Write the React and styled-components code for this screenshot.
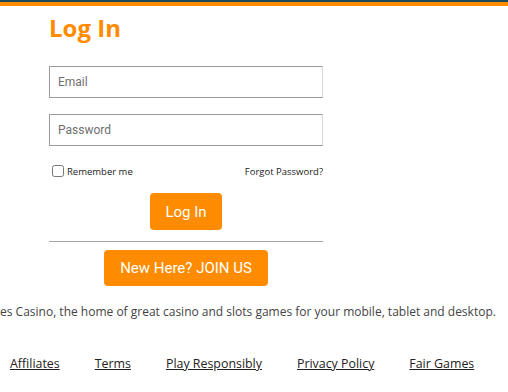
import React from "react";
import styled, { createGlobalStyle } from "styled-components";

const Global = createGlobalStyle`
  html, body { margin: 0; padding: 0; background: #fff; }
  body { font-family: "Open Sans", sans-serif; overflow: hidden; }
  * { box-sizing: border-box; }
`;

const Page = styled.div`
  width: 508px;
  height: 392px;
  overflow: hidden;
  display: flex;
  flex-direction: column;
`;

const TopBar = styled.div`
  height: 6px;
  border-top: 2px solid #1d4a5a;
  background: #ff8c00;
  flex-shrink: 0;
`;

const Form = styled.form`
  width: 274px;
  margin-left: 49px;
  display: flex;
  flex-direction: column;
`;

const Title = styled.h1`
  margin: 6px 0 0;
  font-family: "Open Sans", sans-serif;
  font-weight: 700;
  font-size: 24px;
  line-height: 32px;
  color: #ff8c00;
`;

const Field = styled.input`
  width: 100%;
  height: 32px;
  margin-top: ${(p) => p.$mt}px;
  border: 1px solid #9a9a9a;
  border-right-color: #d8d8d8;
  padding: 0 8px;
  font-family: Roboto, sans-serif;
  font-size: 12px;
  color: #333;
  outline: none;
  &::placeholder { color: #6f6f6f; }
`;

const OptionsRow = styled.div`
  display: flex;
  justify-content: space-between;
  align-items: center;
  margin-top: 18px;
  height: 14px;
  font-family: "Open Sans", sans-serif;
  font-size: 9.5px;
  color: #222;
`;

const CheckLabel = styled.label`
  display: flex;
  align-items: center;
  gap: 3px;
  padding-left: 3px;
`;

const Check = styled.input`
  width: 12px;
  height: 12px;
  margin: 0;
`;

const Forgot = styled.a`
  color: #222;
  text-decoration: none;
`;

const Button = styled.button`
  align-self: center;
  width: ${(p) => p.$w}px;
  height: ${(p) => p.$h}px;
  margin-top: ${(p) => p.$mt}px;
  border: none;
  border-radius: 4px;
  background: #ff8c00;
  color: #fff;
  font-family: Roboto, "Liberation Sans", sans-serif;
  font-size: 15px;
  padding: 0;
`;

const Divider = styled.hr`
  width: 100%;
  margin: 11px 0 0;
  border: none;
  border-top: 1px solid #a5a5a5;
  height: 0;
`;

const Blurb = styled.p`
  margin: 18px 0 0;
  white-space: nowrap;
  font-family: "Open Sans", sans-serif;
  font-size: 12px;
  color: #444;
  line-height: 16px;
`;

const Footer = styled.nav`
  display: flex;
  gap: 35px;
  padding-left: 10px;
  margin-top: 35px;
`;

const FootLink = styled.a`
  font-family: "Open Sans", sans-serif;
  font-size: 12.4px;
  color: #222;
  text-decoration: underline;
`;

export default function App() {
  return (
    <Page>
      <Global />
      <TopBar />
      <Form onSubmit={(e) => e.preventDefault()}>
        <Title>Log In</Title>
        <Field $mt={22} type="text" placeholder="Email" />
        <Field $mt={16} type="password" placeholder="Password" />
        <OptionsRow>
          <CheckLabel>
            <Check type="checkbox" />
            Remember me
          </CheckLabel>
          <Forgot href="#">Forgot Password?</Forgot>
        </OptionsRow>
        <Button $w={72} $h={37} $mt={15} type="submit">Log In</Button>
        <Divider />
        <Button $w={164} $h={36} $mt={8} type="button">New Here? JOIN US</Button>
      </Form>
      <Blurb>es Casino, the home of great casino and slots games for your mobile, tablet and desktop.</Blurb>
      <Footer>
        <FootLink href="#">Affiliates</FootLink>
        <FootLink href="#">Terms</FootLink>
        <FootLink href="#">Play Responsibly</FootLink>
        <FootLink href="#">Privacy Policy</FootLink>
        <FootLink href="#">Fair Games</FootLink>
      </Footer>
    </Page>
  );
}
